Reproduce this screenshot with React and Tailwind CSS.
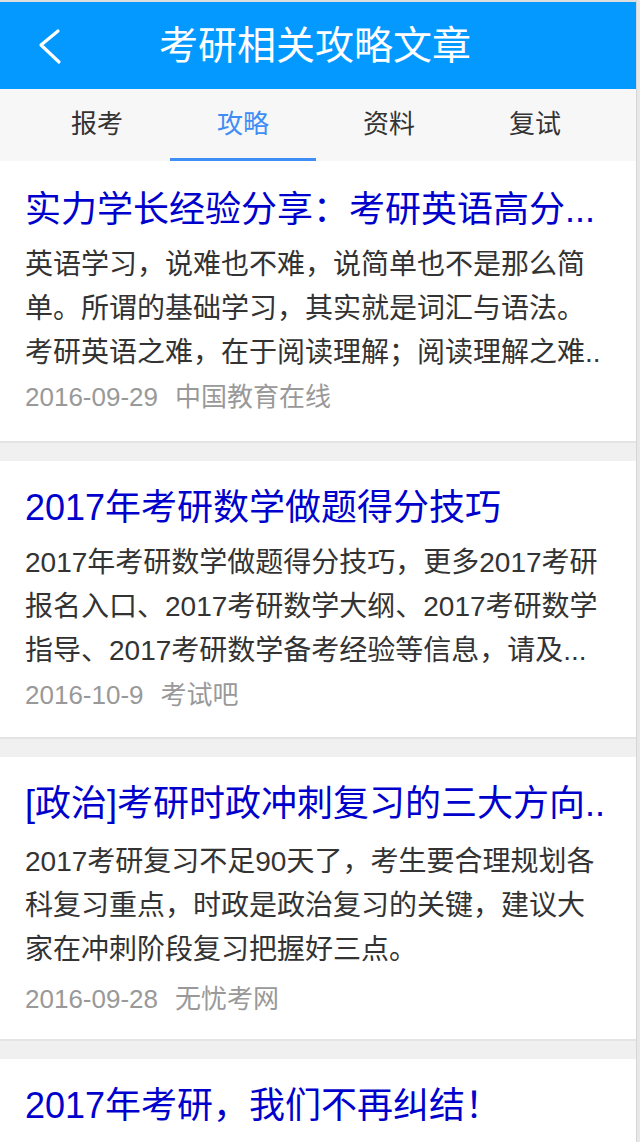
import { useState } from "react";

// article list for the "攻略" tab
const articles = [
  {
    title: "实力学长经验分享：考研英语高分...",
    body: "英语学习，说难也不难，说简单也不是那么简单。所谓的基础学习，其实就是词汇与语法。考研英语之难，在于阅读理解；阅读理解之难..",
    date: "2016-09-29",
    source: "中国教育在线",
    pt: "pt-[21px]",
    pb: "pb-[26px]",
    bodyMt: "mt-[5px]",
    dateMt: "mt-[4px]",
  },
  {
    title: "2017年考研数学做题得分技巧",
    body: "2017年考研数学做题得分技巧，更多2017考研报名入口、2017考研数学大纲、2017考研数学指导、2017考研数学备考经验等信息，请及...",
    date: "2016-10-9",
    source: "考试吧",
    pt: "pt-[19px]",
    pb: "pb-[24px]",
    bodyMt: "mt-[5px]",
    dateMt: "mt-[4px]",
  },
  {
    title: "[政治]考研时政冲刺复习的三大方向..",
    body: "2017考研复习不足90天了，考生要合理规划各科复习重点，时政是政治复习的关键，建议大家在冲刺阶段复习把握好三点。",
    date: "2016-09-28",
    source: "无忧考网",
    pt: "pt-[19px]",
    pb: "pb-[22px]",
    bodyMt: "mt-[8px]",
    dateMt: "mt-[9px]",
  },
  {
    title: "2017年考研，我们不再纠结！",
    pt: "pt-[19px]",
    pb: "pb-[24px]",
  },
];

const tabs = ["报考", "攻略", "资料", "复试"];

const font = {
  fontFamily: '"Liberation Sans", "Noto Sans CJK SC", sans-serif',
};

export default function App() {
  const [active, setActive] = useState(1);

  return (
    <div className="h-[1142px] w-[640px] overflow-hidden bg-[#e8e8e8]" style={font}>
      <div className="min-h-full w-[637px] border-r border-[#d6d6d6] bg-[#f0f0f0]">
        {/* Header */}
        <div className="border-t-2 border-[#dedede]">
          <div className="relative flex h-[87px] items-center justify-center bg-[#0399ff]">
            <button className="absolute left-[38px] top-[25px] h-[40px] w-[26px]">
              <svg width="26" height="40" viewBox="0 0 26 40" fill="none">
                <path
                  d="M20 4 L3 18 L21 35"
                  stroke="white"
                  strokeWidth="3.2"
                  strokeLinecap="round"
                  strokeLinejoin="round"
                />
              </svg>
            </button>
            <h1 className="-ml-[6px] text-[39px] leading-none text-white">考研相关攻略文章</h1>
          </div>
        </div>

        {/* Tabs */}
        <div className="flex h-[72px] bg-[#f7f7f7] px-[24px]">
          {tabs.map((t, i) => (
            <button
              key={t}
              onClick={() => setActive(i)}
              className={
                "flex w-[146px] items-center justify-center border-b-[3px] pt-[2px] text-[26px] " +
                (i === active
                  ? "border-[#3f8ef5] text-[#3f8ef5]"
                  : "border-transparent text-[#333]")
              }
            >
              {t}
            </button>
          ))}
        </div>

        {/* Article cards */}
        {articles.map((a, i) => (
          <div
            key={i}
            className={
              "border-b-2 border-[#e4e4e4] bg-white pl-[25px] " +
              a.pt + " " + a.pb + " " +
              (i > 0 ? "mt-[18px]" : "")
            }
          >
            <h2 className="overflow-hidden whitespace-nowrap text-[36px] leading-[56px] text-[#0000cc]">
              {a.title}
            </h2>
            {a.body && (
              <>
                <p className={"w-[586px] text-[28px] leading-[44px] text-[#333] " + a.bodyMt}>
                  {a.body}
                </p>
                <p className={"text-[26px] leading-[36px] text-[#999] " + a.dateMt}>
                  {a.date}
                  <span className="ml-[17px]">{a.source}</span>
                </p>
              </>
            )}
          </div>
        ))}
      </div>
    </div>
  );
}
